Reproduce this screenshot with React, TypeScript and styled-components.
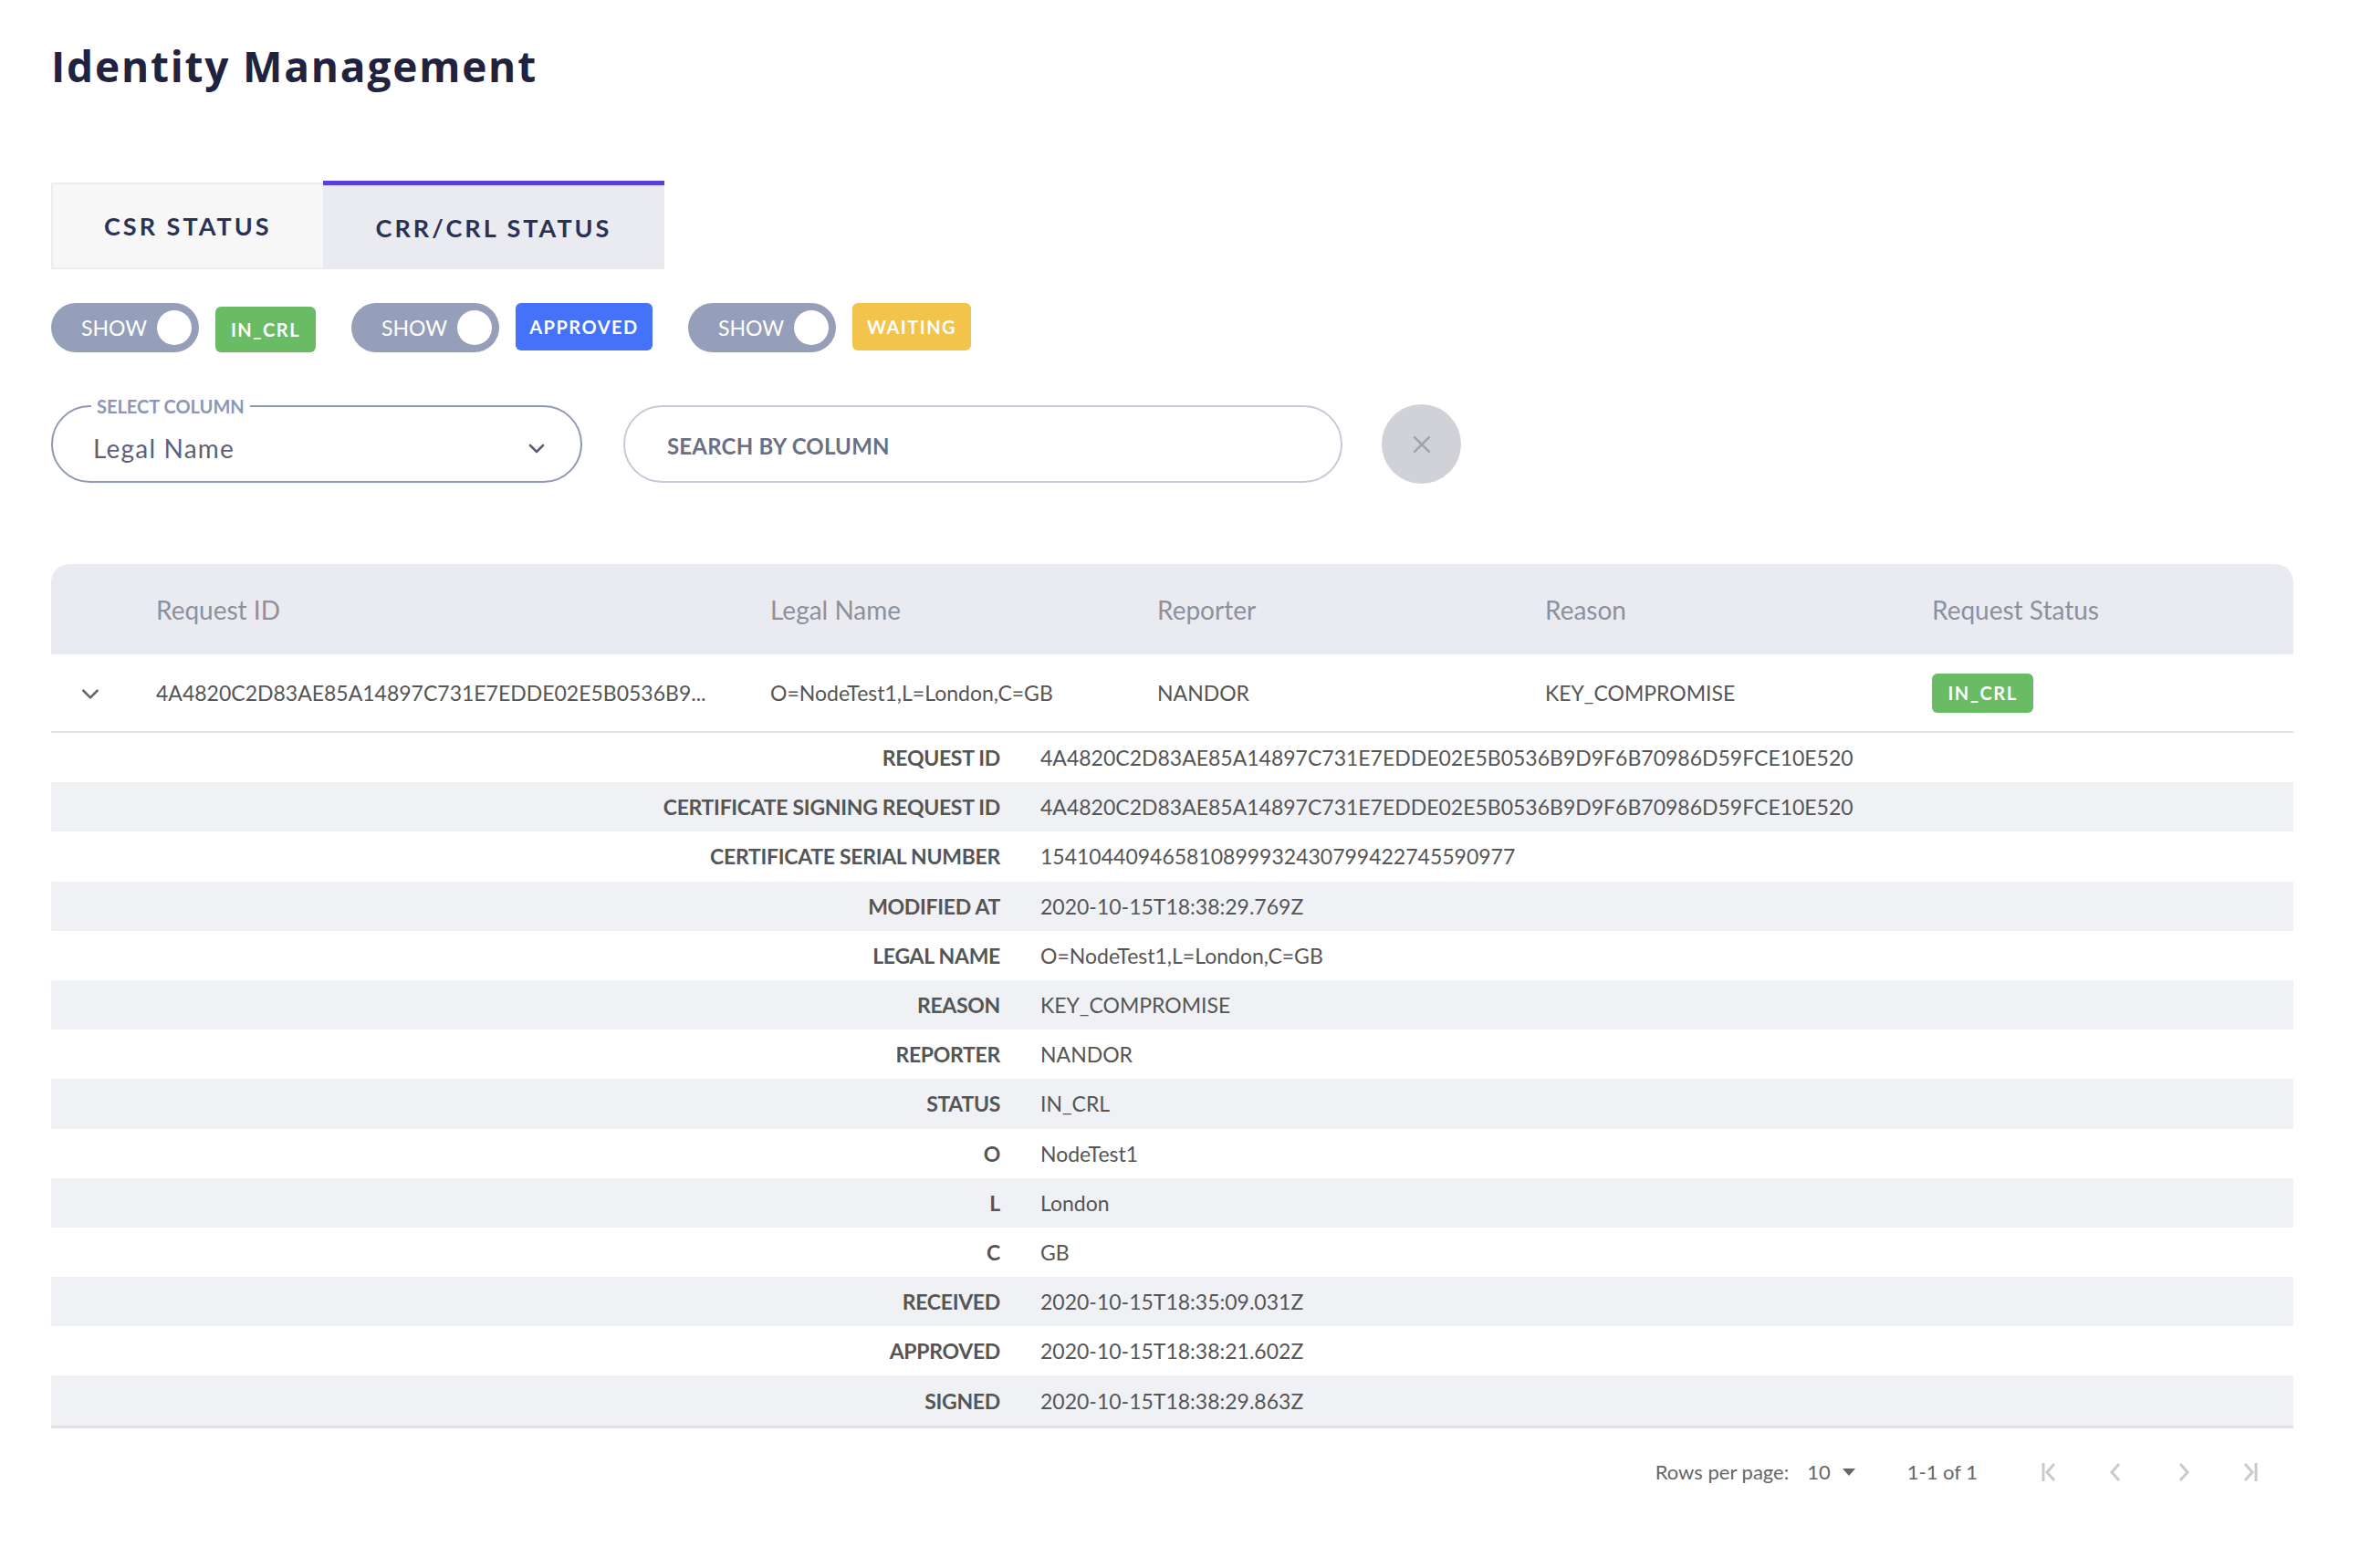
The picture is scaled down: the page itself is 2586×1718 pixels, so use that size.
import React from "react";
import styled, { createGlobalStyle, css } from "styled-components";

const GlobalStyle = createGlobalStyle`
  html, body {
    margin: 0;
    padding: 0;
    background: #ffffff;
  }
  body {
    font-family: "Lato", "Open Sans", "Noto Sans", sans-serif;
    color: #555555;
  }
  * { box-sizing: border-box; }
`;

const Page = styled.div`
  padding: 44px 73px 0 56px;
  min-height: 1718px;
`;

const Title = styled.h1`
  margin: 0;
  font-family: "Open Sans", "Noto Sans", sans-serif;
  font-weight: 700;
  font-size: 46px;
  line-height: 56px;
  letter-spacing: 1.8px;
  color: #1f2340;
`;

const Tabs = styled.div`
  display: flex;
  align-items: flex-end;
  margin-top: 98px;
  height: 97px;
`;

const Tab = styled.div<{ $active?: boolean }>`
  display: flex;
  align-items: center;
  justify-content: center;
  font-weight: 700;
  font-size: 27px;
  letter-spacing: 3px;
  color: #2b3153;
  ${(p) =>
    p.$active
      ? css`
          height: 97px;
          padding: 0 58px;
          background: #eaebf1;
          border-top: 5px solid #5b3fdc;
        `
      : css`
          height: 95px;
          padding: 0 56px;
          background: #f7f7f8;
          border: 2px solid #ececf1;
          border-right: none;
        `}
`;

const FilterRow = styled.div`
  display: flex;
  align-items: flex-start;
  margin-top: 37px;
  height: 54px;
`;

const FilterGroup = styled.div`
  display: flex;
  align-items: flex-start;
  gap: 18px;
  margin-right: 39px;
`;

const Toggle = styled.div`
  display: flex;
  align-items: center;
  justify-content: space-between;
  width: 162px;
  height: 54px;
  border-radius: 27px;
  background: #959fba;
  padding: 0 8px 0 33px;
  color: #ffffff;
  font-size: 23px;
`;

const Knob = styled.span`
  width: 38px;
  height: 38px;
  border-radius: 50%;
  background: #ffffff;
`;

const Badge = styled.span<{ $color: string; $h?: number; $top?: number; $w?: number }>`
  display: inline-flex;
  align-items: center;
  justify-content: center;
  height: ${(p) => p.$h ?? 52}px;
  width: ${(p) => (p.$w ? `${p.$w}px` : "auto")};
  margin-top: ${(p) => p.$top ?? 0}px;
  padding: 0 10px;
  border-radius: 6px;
  background: ${(p) => p.$color};
  color: #ffffff;
  font-weight: 700;
  font-size: 20px;
  letter-spacing: 1.5px;
`;

const SearchRow = styled.div`
  display: flex;
  align-items: center;
  margin-top: 58px;
  height: 85px;
`;

const SelectField = styled.div`
  position: relative;
  display: flex;
  align-items: center;
  justify-content: space-between;
  width: 582px;
  height: 85px;
  border: 2px solid #8f98b6;
  border-radius: 43px;
  padding: 8px 36px 0 44px;
`;

const Legend = styled.span`
  position: absolute;
  left: 42px;
  top: -12px;
  padding: 0 6px;
  background: #ffffff;
  color: #8d96b4;
  font-weight: 700;
  font-size: 20px;
  line-height: 22px;
`;

const SelectValue = styled.span`
  font-size: 28px;
  letter-spacing: 1.2px;
  color: #5d6077;
`;

const SearchField = styled.div`
  display: flex;
  align-items: center;
  width: 788px;
  height: 85px;
  margin-left: 45px;
  border: 2px solid #c4cad9;
  border-radius: 43px;
  padding: 4px 0 0 46px;
  color: #6b6f85;
  font-weight: 700;
  font-size: 24px;
  letter-spacing: 0.2px;
`;

const ClearButton = styled.div`
  display: flex;
  align-items: center;
  justify-content: center;
  width: 87px;
  height: 87px;
  margin-left: 43px;
  border-radius: 50%;
  background: #d1d2d7;
`;

const Table = styled.div`
  margin-top: 89px;
`;

const columns = "115px 673px 424px 425px 424px 1fr";

const HeaderRow = styled.div`
  display: grid;
  grid-template-columns: ${columns};
  align-items: center;
  height: 99px;
  background: #eaebf0;
  border-radius: 20px 20px 0 0;
  color: #8e909c;
  font-size: 28px;
`;

const DataRow = styled.div`
  display: grid;
  grid-template-columns: ${columns};
  align-items: center;
  height: 86px;
  border-bottom: 2px solid #e1e1e1;
  color: #555555;
  font-size: 23px;
`;

const ExpandCell = styled.div`
  display: flex;
  justify-content: center;
  padding-right: 30px;
  padding-top: 2px;
`;

const Cell = styled.div`
  white-space: nowrap;
  overflow: hidden;
`;

const DetailList = styled.div`
  border-bottom: 3px solid #e2e2e2;
`;

const DetailRow = styled.div<{ $shaded: boolean }>`
  display: grid;
  grid-template-columns: 1040px 1fr;
  column-gap: 44px;
  align-items: center;
  height: 54.2px;
  background: ${(p) => (p.$shaded ? "#f0f1f5" : "#ffffff")};
`;

const DetailLabel = styled.div`
  text-align: right;
  font-weight: 700;
  font-size: 23px;
  letter-spacing: -0.3px;
  color: #555555;
`;

const DetailValue = styled.div`
  font-size: 23px;
  color: #555555;
`;

const Pagination = styled.div`
  display: flex;
  align-items: center;
  justify-content: flex-end;
  height: 96px;
  padding-right: 12px;
  color: #666666;
  font-size: 22px;
`;

const RowsLabel = styled.span`
  margin-right: 20px;
`;

const RowsSelect = styled.span`
  display: inline-flex;
  align-items: center;
  gap: 12px;
  margin-right: 56px;
`;

const Range = styled.span`
  margin-right: 42px;
`;

const PageButton = styled.span`
  display: inline-flex;
  align-items: center;
  justify-content: center;
  width: 73px;
  height: 48px;
`;

const ChevronDown = ({ size = 24, color = "#5d6077", width = 2.6 }: { size?: number; color?: string; width?: number }) => (
  <svg width={size} height={size} viewBox="0 0 24 24" fill="none" stroke={color} strokeWidth={width} strokeLinecap="round" strokeLinejoin="round">
    <path d="M5 9l7 7 7-7" />
  </svg>
);

const CloseIcon = () => (
  <svg width="26" height="26" viewBox="0 0 24 24" fill="none" stroke="#a2a3ad" strokeWidth="2.4">
    <path d="M4 4l16 16M20 4L4 20" />
  </svg>
);

const PagerIcon = ({ kind }: { kind: "first" | "prev" | "next" | "last" }) => {
  const paths: Record<string, React.ReactNode> = {
    first: (
      <>
        <path d="M5 2v20" />
        <path d="M17 3l-8 9 8 9" />
      </>
    ),
    prev: <path d="M15 3l-8 9 8 9" />,
    next: <path d="M9 3l8 9-8 9" />,
    last: (
      <>
        <path d="M7 3l8 9-8 9" />
        <path d="M19 2v20" />
      </>
    ),
  };
  return (
    <svg width="24" height="24" viewBox="0 0 24 24" fill="none" stroke="#cacaca" strokeWidth="3">
      {paths[kind]}
    </svg>
  );
};

const DropTriangle = () => (
  <svg width="16" height="10" viewBox="0 0 16 10">
    <path d="M1 1h14L8 9z" fill="#666666" />
  </svg>
);

const filters = [
  { label: "IN_CRL", color: "#69bb64", h: 50, top: 4, w: 110 },
  { label: "APPROVED", color: "#4472f9", h: 52, top: 0, w: 150 },
  { label: "WAITING", color: "#f2c44c", h: 52, top: 0, w: 130 },
];

const requestId = "4A4820C2D83AE85A14897C731E7EDDE02E5B0536B9D9F6B70986D59FCE10E520";

const details: [string, string][] = [
  ["REQUEST ID", requestId],
  ["CERTIFICATE SIGNING REQUEST ID", requestId],
  ["CERTIFICATE SERIAL NUMBER", "154104409465810899932430799422745590977"],
  ["MODIFIED AT", "2020-10-15T18:38:29.769Z"],
  ["LEGAL NAME", "O=NodeTest1,L=London,C=GB"],
  ["REASON", "KEY_COMPROMISE"],
  ["REPORTER", "NANDOR"],
  ["STATUS", "IN_CRL"],
  ["O", "NodeTest1"],
  ["L", "London"],
  ["C", "GB"],
  ["RECEIVED", "2020-10-15T18:35:09.031Z"],
  ["APPROVED", "2020-10-15T18:38:21.602Z"],
  ["SIGNED", "2020-10-15T18:38:29.863Z"],
];

export default function App() {
  return (
    <>
      <GlobalStyle />
      <Page>
        <Title>Identity Management</Title>

        <Tabs>
          <Tab>CSR STATUS</Tab>
          <Tab $active>CRR/CRL STATUS</Tab>
        </Tabs>

        <FilterRow>
          {filters.map((f) => (
            <FilterGroup key={f.label}>
              <Toggle>
                SHOW
                <Knob />
              </Toggle>
              <Badge $color={f.color} $h={f.h} $top={f.top} $w={f.w}>
                {f.label}
              </Badge>
            </FilterGroup>
          ))}
        </FilterRow>

        <SearchRow>
          <SelectField>
            <Legend>SELECT COLUMN</Legend>
            <SelectValue>Legal Name</SelectValue>
            <ChevronDown size={24} color="#5d6077" width={2.6} />
          </SelectField>
          <SearchField>SEARCH BY COLUMN</SearchField>
          <ClearButton>
            <CloseIcon />
          </ClearButton>
        </SearchRow>

        <Table>
          <HeaderRow>
            <span />
            <Cell>Request ID</Cell>
            <Cell>Legal Name</Cell>
            <Cell>Reporter</Cell>
            <Cell>Reason</Cell>
            <Cell>Request Status</Cell>
          </HeaderRow>
          <DataRow>
            <ExpandCell>
              <ChevronDown size={26} color="#666666" width={2.4} />
            </ExpandCell>
            <Cell>4A4820C2D83AE85A14897C731E7EDDE02E5B0536B9...</Cell>
            <Cell>O=NodeTest1,L=London,C=GB</Cell>
            <Cell>NANDOR</Cell>
            <Cell>KEY_COMPROMISE</Cell>
            <Cell>
              <Badge $color="#69bb64" $h={43} $w={111}>
                IN_CRL
              </Badge>
            </Cell>
          </DataRow>
          <DetailList>
            {details.map(([label, value], i) => (
              <DetailRow key={label} $shaded={i % 2 === 1}>
                <DetailLabel>{label}</DetailLabel>
                <DetailValue>{value}</DetailValue>
              </DetailRow>
            ))}
          </DetailList>
        </Table>

        <Pagination>
          <RowsLabel>Rows per page:</RowsLabel>
          <RowsSelect>
            10
            <DropTriangle />
          </RowsSelect>
          <Range>1-1 of 1</Range>
          <PageButton>
            <PagerIcon kind="first" />
          </PageButton>
          <PageButton>
            <PagerIcon kind="prev" />
          </PageButton>
          <PageButton>
            <PagerIcon kind="next" />
          </PageButton>
          <PageButton>
            <PagerIcon kind="last" />
          </PageButton>
        </Pagination>
      </Page>
    </>
  );
}
